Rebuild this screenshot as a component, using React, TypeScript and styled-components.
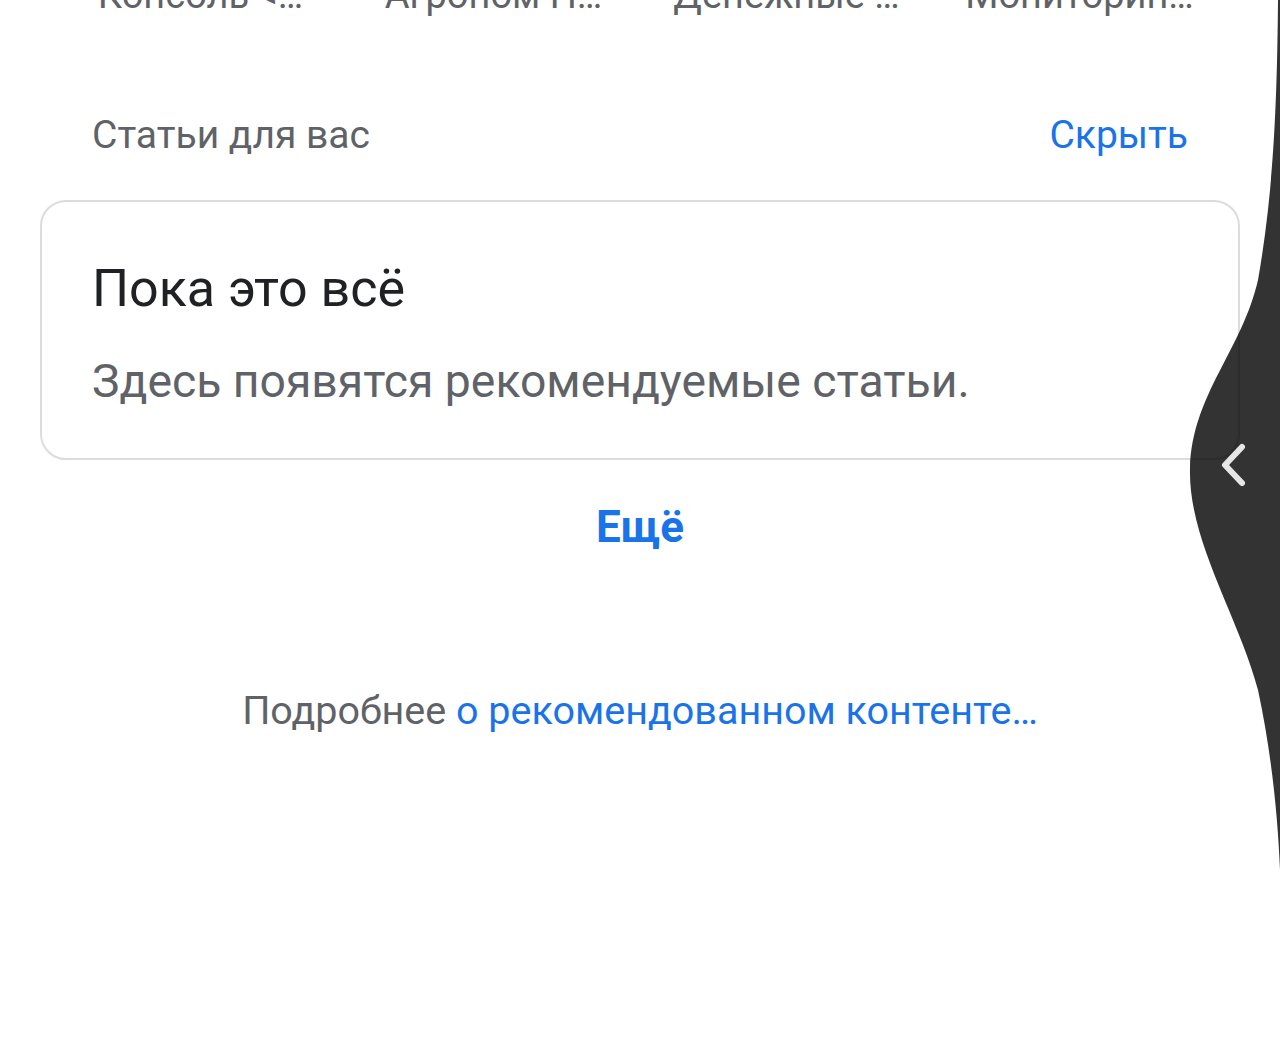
import React from "react"
import styled, { createGlobalStyle } from "styled-components"

const GlobalStyle = createGlobalStyle`
  html, body {
    margin: 0;
    padding: 0;
    background: #ffffff;
  }
  body {
    font-family: Roboto, "Noto Sans", "Liberation Sans", sans-serif;
  }
`

const tiles = ["Консоль <…", "Агроном Н…", "Денежные …", "Мониторин…"]

const App = () => {
  return (
    <Page>
      <GlobalStyle />
      <Tiles>
        {tiles.map((t) => (
          <Tile key={t}>{t}</Tile>
        ))}
      </Tiles>
      <SectionHeader>
        <SectionTitle>Статьи для вас</SectionTitle>
        <LinkButton>Скрыть</LinkButton>
      </SectionHeader>
      <EmptyCard>
        <CardTitle>Пока это всё</CardTitle>
        <CardText>Здесь появятся рекомендуемые статьи.</CardText>
      </EmptyCard>
      <MoreButton>Ещё</MoreButton>
      <Footer>
        Подробнее <a href="#">о рекомендованном контенте…</a>
      </Footer>
      <EdgeHandle viewBox="0 0 100 1058" preserveAspectRatio="none">
        <path
          d="M98 0 C97 120 92 200 78 280 C62 350 12 395 10 468 C8 540 58 615 78 690 C92 755 98 820 100 870 L100 0 Z"
          fill="rgba(0,0,0,0.8)"
        />
        <path
          d="M62 447 L45 465 L62 483"
          fill="none"
          stroke="#e6e6e6"
          strokeWidth="6"
          strokeLinecap="round"
          strokeLinejoin="round"
        />
      </EdgeHandle>
    </Page>
  )
}

export default App

const Page = styled.div`
  position: relative;
  width: 1280px;
  height: 1058px;
  overflow: hidden;
  background: #ffffff;
`

const Tiles = styled.div`
  display: grid;
  grid-template-columns: repeat(4, 1fr);
  padding: 0 54px;
  margin-top: -28px;
  height: 46px;
`

const Tile = styled.div`
  text-align: center;
  font-size: 38px;
  line-height: 46px;
  color: #5f6368;
  white-space: nowrap;
`

const SectionHeader = styled.div`
  display: flex;
  justify-content: space-between;
  align-items: center;
  padding: 0 92px;
  margin-top: 94px;
  height: 46px;
`

const SectionTitle = styled.div`
  font-size: 39px;
  color: #5f6368;
`

const LinkButton = styled.div`
  font-size: 39px;
  color: #1a73e8;
`

const EmptyCard = styled.div`
  margin: 42px 40px 0;
  height: 260px;
  box-sizing: border-box;
  border: 2px solid #dadce0;
  border-radius: 26px;
  padding: 57px 50px 0;
  display: flex;
  flex-direction: column;
  gap: 36px;
`

const CardTitle = styled.div`
  font-size: 52px;
  line-height: 60px;
  color: #202124;
`

const CardText = styled.div`
  font-size: 46.3px;
  line-height: 52px;
  color: #5f6368;
`

const MoreButton = styled.div`
  text-align: center;
  margin-top: 41px;
  font-size: 44px;
  font-weight: 700;
  color: #1a73e8;
`

const Footer = styled.div`
  text-align: center;
  margin-top: 134px;
  font-size: 39.5px;
  color: #5f6368;

  a {
    color: #1a73e8;
    text-decoration: none;
  }
`

const EdgeHandle = styled.svg`
  position: absolute;
  top: 0;
  right: 0;
  width: 100px;
  height: 1058px;
`
